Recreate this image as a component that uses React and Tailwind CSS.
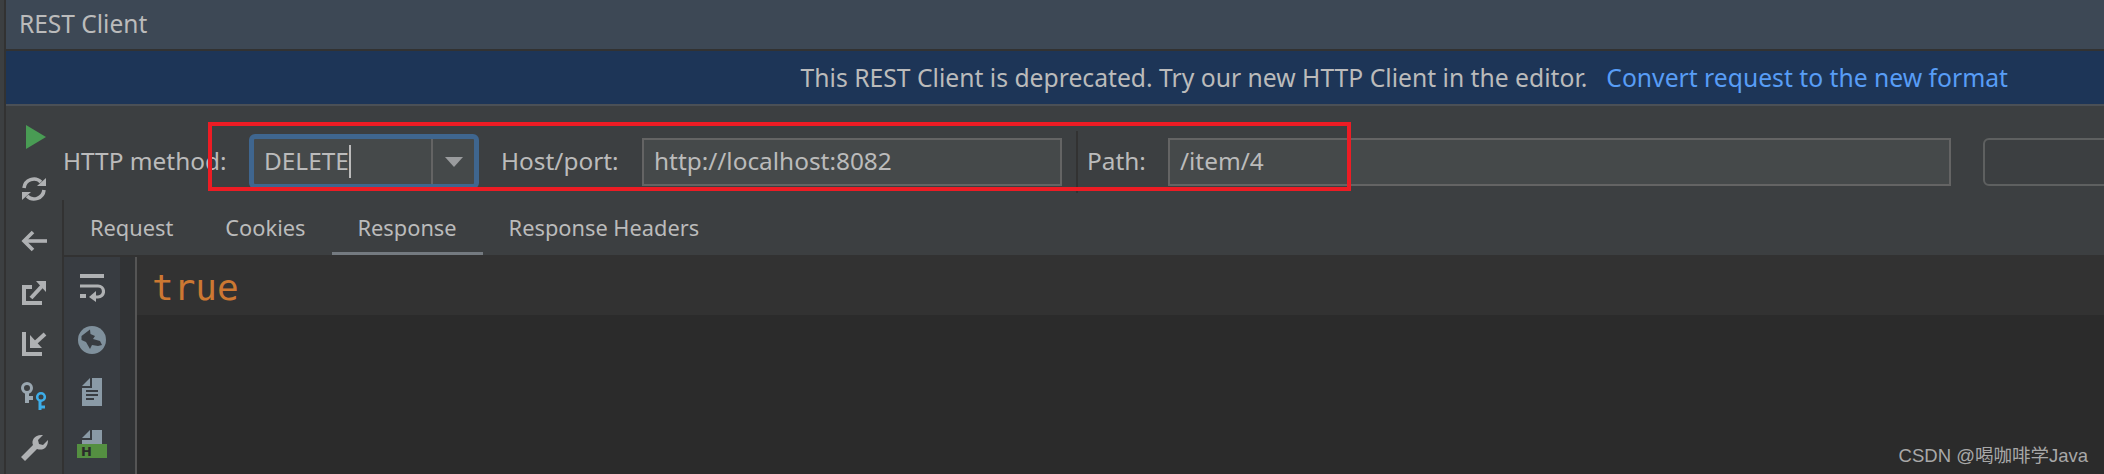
import React from 'react';

const uiFont = "font-['Noto_Sans','Open_Sans',sans-serif]";

// left toolbar icons, drawn at screenshot size
const PlayIcon = () => (
    <svg width="26" height="24" viewBox="0 0 26 24"><path d="M5 0 L25 12 L5 24 Z" fill="#499c54" /></svg>
);

const RefreshIcon = () => (
    <svg width="26" height="26" viewBox="0 0 26 26" fill="none" stroke="#afb1b3" strokeWidth="3.6">
        <path d="M3 12 A10 10 0 0 1 20 6" />
        <path d="M23 14 A10 10 0 0 1 6 20" />
        <path d="M16 10 L25 10 L25 2 Z" fill="#afb1b3" stroke="none" />
        <path d="M10 16 L1 16 L1 24 Z" fill="#afb1b3" stroke="none" />
    </svg>
);

const BackIcon = () => (
    <svg width="26" height="22" viewBox="0 0 26 22" fill="none" stroke="#afb1b3" strokeWidth="3.6">
        <path d="M26 11 L3 11" />
        <path d="M12 2 L3 11 L12 20" />
    </svg>
);

const ExportIcon = () => (
    <svg width="26" height="26" viewBox="0 0 26 26" fill="none" stroke="#afb1b3" strokeWidth="4">
        <path d="M11 7 L3 7 L3 23 L21 23" />
        <path d="M10 18 L22 5" />
        <path d="M15 1 L25 1 L25 12 Z" fill="#afb1b3" stroke="none" />
    </svg>
);

const ImportIcon = () => (
    <svg width="26" height="26" viewBox="0 0 26 26" fill="none" stroke="#afb1b3" strokeWidth="4">
        <path d="M3 1 L3 23 L21 23" />
        <path d="M24 3 L13 13" />
        <path d="M9 4 L9 17 L21 17 Z" fill="#afb1b3" stroke="none" />
    </svg>
);

const KeysIcon = () => (
    <svg width="28" height="30" viewBox="0 0 28 30" fill="none">
        <circle cx="7" cy="7" r="4.5" stroke="#9aa7b0" strokeWidth="3" />
        <path d="M7 12 L7 22 M7 17 L13 17" stroke="#9aa7b0" strokeWidth="4" />
        <circle cx="21" cy="16" r="3.8" stroke="#3dade8" strokeWidth="2.6" />
        <path d="M20 20 L20 29 M20 26 L25 26" stroke="#3dade8" strokeWidth="3" />
    </svg>
);

const WrenchIcon = () => (
    <svg width="28" height="28" viewBox="0 0 28 28" fill="#afb1b3">
        <path d="M1 23 L13 11 C11 6 15 0 23 1 L18 6 L19 10 L23 11 L28 6 C28 14 23 17 17 15 L5 27 Z" />
    </svg>
);

// response toolbar icons
const WrapIcon = () => (
    <svg width="26" height="28" viewBox="0 0 26 28" fill="#afb1b3">
        <rect x="1" y="0" width="24" height="4" />
        <path d="M1 12 H19 A5.5 5.5 0 0 1 19 23 H15" fill="none" stroke="#afb1b3" strokeWidth="3.2" />
        <rect x="1" y="20" width="6" height="4" />
        <path d="M17 17 L17 28 L10 23 Z" />
    </svg>
);

const GlobeIcon = () => (
    <svg width="28" height="28" viewBox="0 0 28 28">
        <circle cx="14" cy="14" r="14" fill="#7f909c" />
        <path d="M3.5 10 L12 3.5 L12.5 8 L17 10 L15 13 L22 15 L24 19 L20 20 L14 19 L12 23 L8 16 L3.5 14 Z" fill="#383c41" />
    </svg>
);

const DocIcon = () => (
    <svg width="20" height="28" viewBox="0 0 20 28">
        <path d="M0 8 L8 0 L8 8 Z" fill="#8a9aa6" />
        <path d="M10 0 L20 0 L20 28 L0 28 L0 10 L10 10 Z" fill="#8a9aa6" />
        <path d="M4 13 H16 M4 17 H16 M4 21 H12" stroke="#383c41" strokeWidth="2" />
    </svg>
);

const HtmlDocIcon = () => (
    <div className="flex flex-col items-center">
        <svg width="20" height="14" viewBox="0 0 20 14">
            <path d="M0 8 L8 0 L8 8 Z" fill="#8a9aa6" />
            <path d="M10 0 L20 0 L20 14 L0 14 L0 10 L10 10 Z" fill="#8a9aa6" />
        </svg>
        <div className="w-[30px] h-[14px] bg-[#548f41] flex items-center pl-[4px] text-[#2b2b2b] text-[13px] font-bold leading-none font-['DejaVu_Sans',sans-serif]">H</div>
    </div>
);

const ToolButton = ({ children, className = 'h-[52px]' }) => (
    <div className={`flex items-center justify-center ${className}`}>{children}</div>
);

const TabItem = ({ label, active }) => (
    <div className={`h-full px-[26px] pt-[4px] flex items-center border-b-[3px] whitespace-nowrap ${active ? 'border-[#747a80]' : 'border-transparent'}`}>
        {label}
    </div>
);

const App = () => {
    return (
        <div className={`relative w-[2104px] h-[474px] overflow-hidden bg-[#3c3f41] text-[#bbbbbb] text-[24.4px] whitespace-nowrap ${uiFont}`}>
            <div className="flex h-full">
                <div className="w-[6px] shrink-0 border-r-2 border-[#323232]" />
                <div className="flex-1 min-w-0 flex flex-col">
                    {/* title */}
                    <div className="h-[49px] shrink-0 bg-[#3d4855] flex items-center pl-[13px] text-[24.5px]">REST Client</div>
                    <div className="h-[2px] shrink-0 bg-[#323232]" />

                    {/* deprecation banner */}
                    <div className="h-[53px] shrink-0 bg-[#1d3557] flex items-center justify-end gap-[19px] pr-[96px] text-[24.7px]">
                        <span>This REST Client is deprecated. Try our new HTTP Client in the editor.</span>
                        <span className="text-[#589df6]">Convert request to the new format</span>
                    </div>
                    <div className="h-[2px] shrink-0 bg-[#4b5056]" />

                    <div className="flex-1 min-h-0 flex">
                        {/* run toolbar */}
                        <div className="w-[56px] shrink-0 flex flex-col pt-[5px]">
                            <ToolButton><PlayIcon /></ToolButton>
                            <ToolButton><RefreshIcon /></ToolButton>
                            <ToolButton><BackIcon /></ToolButton>
                            <ToolButton><ExportIcon /></ToolButton>
                            <ToolButton><ImportIcon /></ToolButton>
                            <ToolButton><KeysIcon /></ToolButton>
                            <ToolButton><WrenchIcon /></ToolButton>
                        </div>

                        <div className="flex-1 min-w-0 flex flex-col">
                            {/* request form */}
                            <div className="h-[94px] shrink-0 flex items-center pt-[17px] pl-[1px]">
                                <span className="w-[186px] shrink-0">HTTP method:</span>
                                <div className="w-[230px] h-[55px] shrink-0 rounded-[6px] bg-[#45494a] border-[5px] border-[#3f668f] flex items-center">
                                    <div className="flex-1 flex items-center pl-[10px] h-full">
                                        <span>DELETE</span>
                                        <span className="w-[2px] h-[33px] bg-[#bbbbbb]" />
                                    </div>
                                    <div className="w-[43px] h-full border-l-2 border-[#646464] flex items-center justify-center">
                                        <span className="w-0 h-0 border-x-[9px] border-x-transparent border-t-[10px] border-t-[#9a9c9e]" />
                                    </div>
                                </div>
                                <span className="ml-[22px] w-[141px] shrink-0">Host/port:</span>
                                <div className="w-[420px] h-[48px] shrink-0 bg-[#45494a] border-2 border-[#646464] flex items-center pl-[10px]">http://localhost:8082</div>
                                <div className="ml-[14px] w-[2px] h-[62px] shrink-0 bg-[#323232]" />
                                <span className="ml-[9px] w-[81px] shrink-0">Path:</span>
                                <div className="w-[783px] h-[48px] shrink-0 bg-[#45494a] border-2 border-[#646464] flex items-center pl-[10px]">/item/4</div>
                                <div className="ml-[32px] w-[200px] h-[48px] shrink-0 rounded-[6px] border-2 border-[#5e6060]" />
                            </div>

                            {/* tabs and response */}
                            <div className="flex-1 min-h-0 flex flex-col border-l-2 border-[#323232]">
                                <div className="h-[57px] shrink-0 flex text-[21.8px] border-b-2 border-[#323232]">
                                    <TabItem label="Request" />
                                    <TabItem label="Cookies" />
                                    <TabItem label="Response" active />
                                    <TabItem label="Response Headers" />
                                </div>
                                <div className="flex-1 min-h-0 flex">
                                    <div className="w-[56px] shrink-0 bg-[#383c41] flex flex-col items-center pt-[5px]">
                                        <ToolButton><WrapIcon /></ToolButton>
                                        <ToolButton><GlobeIcon /></ToolButton>
                                        <ToolButton><DocIcon /></ToolButton>
                                        <ToolButton><HtmlDocIcon /></ToolButton>
                                    </div>
                                    <div className="w-[17px] shrink-0 bg-[#313335] border-r-2 border-[#555555]" />
                                    <div className="flex-1 min-w-0 bg-[#2b2b2b]">
                                        <div className="h-[58px] bg-[#323232] pl-[15px] pt-[4px] flex items-center text-[36px] text-[#cc7832] font-['DejaVu_Sans_Mono',monospace]">true</div>
                                    </div>
                                </div>
                            </div>
                        </div>
                    </div>
                </div>
            </div>

            {/* red annotation box */}
            <div className="absolute left-[208px] top-[122px] w-[1143px] h-[69px] border-4 border-[#ed1c24] pointer-events-none" />

            {/* watermark */}
            <div className="absolute right-[16px] top-[442px] text-[18.5px] text-[#a8a8a8] font-['Liberation_Sans','Noto_Sans_CJK_SC',sans-serif]">CSDN @喝咖啡学Java</div>
        </div>
    );
};

export default App;
